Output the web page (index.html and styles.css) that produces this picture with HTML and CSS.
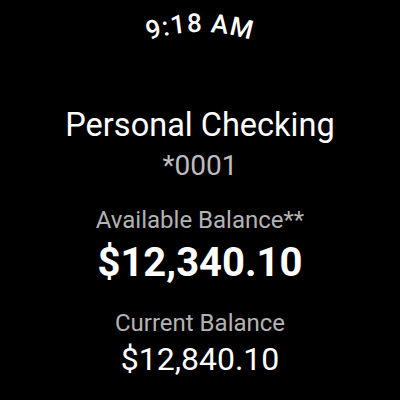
FILE: index.html
```html
<!DOCTYPE html>
<html>
<head>
<meta charset="UTF-8">
<meta name="viewport" content="width=device-width, initial-scale=1">
<link rel="stylesheet" href="styles.css">
</head>
<body>

<div class="screen">
	<svg class="clock" width="400" height="50" viewBox="0 0 400 50">
		<path id="timeArc" d="M 32,200 A 168 168 0 0 1 368,200" fill="none"/>
		<text class="clock-text">
			<textPath href="#timeArc" startOffset="50%" text-anchor="middle">9:18 AM</textPath>
		</text>
	</svg>

	<div class="account">
		<div class="account-name">Personal Checking</div>
		<div class="account-number">*0001</div>
	</div>

	<div class="balance">
		<div class="balance-label">Available Balance**</div>
		<div class="balance-value big">$12,340.10</div>
	</div>

	<div class="balance current">
		<div class="balance-label">Current Balance</div>
		<div class="balance-value">$12,840.10</div>
	</div>
</div>

</body>
</html>
```

FILE: styles.css
```css
* {
	box-sizing: border-box;
}

body {
	margin: 0;
	background-color: #000000;
	font-family: Roboto, "Noto Sans", sans-serif;
}

.screen {
	width: 400px;
	height: 400px;
	display: flex;
	flex-direction: column;
	align-items: center;
	overflow: hidden;
	color: #ffffff;
}

.clock {
	display: block;
	flex-shrink: 0;
}

.clock-text {
	fill: #ffffff;
	font-family: Roboto, sans-serif;
	font-size: 26px;
	font-weight: 500;
	letter-spacing: 1px;
}

.account {
	margin-top: 55px;
	display: flex;
	flex-direction: column;
	align-items: center;
}

.account-name {
	font-size: 32.5px;
	line-height: 40px;
}

.account-number {
	font-size: 28px;
	line-height: 42px;
	color: #bdbdbd;
}

.balance {
	margin-top: 15px;
	display: flex;
	flex-direction: column;
	align-items: center;
}

.balance.current {
	margin-top: 18px;
}

.balance-label {
	font-size: 24px;
	line-height: 36px;
	color: #b3b3b3;
}

.balance-value {
	font-size: 32px;
	line-height: 37px;
}

.balance-value.big {
	font-size: 40px;
	line-height: 49px;
	font-weight: 700;
}
```
